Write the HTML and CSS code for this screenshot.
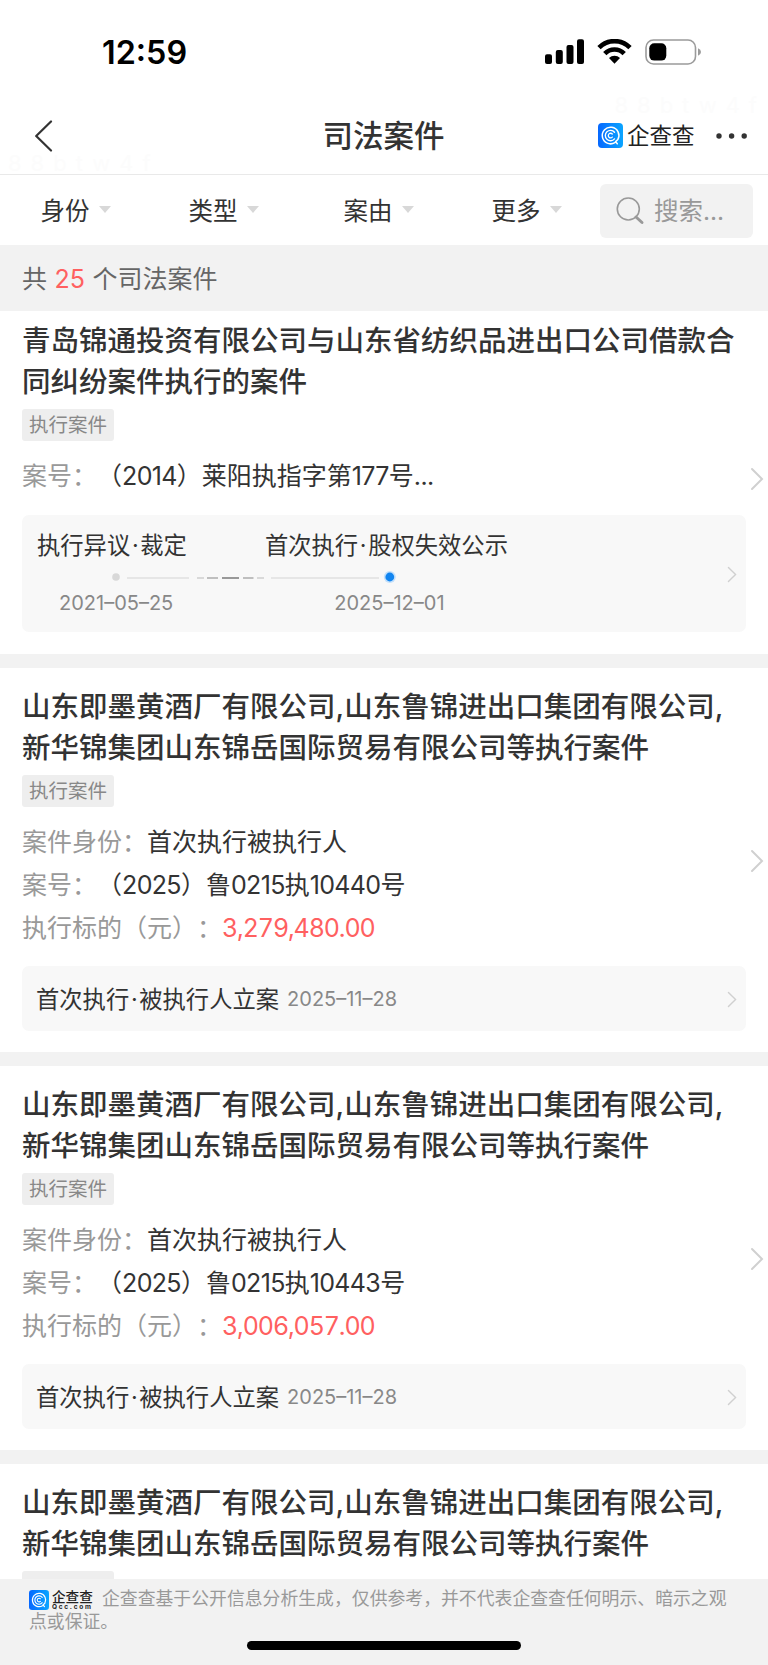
FILE: index.html
```html
<!DOCTYPE html>
<html lang="zh-CN">
  <head>
    <meta charset="utf-8">
    <meta name="viewport" content="width=device-width, initial-scale=1.0">
    <meta content="telephone=no" name="format-detection">
    <title>司法案件</title>
    <link rel="stylesheet" href="styles.css">
  </head>
  <body>
    <svg class="defs" width="0" height="0">
      <defs>
        <linearGradient id="blue" x1="0" y1="0" x2="1" y2="0">
          <stop offset="0" stop-color="#0668ff"/>
          <stop offset="1" stop-color="#0aa5ff"/>
        </linearGradient>
        <symbol id="logo" viewBox="0 0 25 25">
          <rect width="25" height="25" rx="4" fill="url(#blue)"/>
          <g fill="none" stroke="#fff" stroke-linecap="round">
            <path d="M16.9 19.6A8.3 8.3 0 1 1 19.8 16.6L17.6 18.6L19.3 20.8" stroke-width="1.5"/>
            <path d="M16.5 9.2A5.2 5.2 0 1 0 16.5 15.9" stroke-width="1.4"/>
            <path d="M14.3 11A2.3 2.3 0 1 0 14.3 14.1" stroke-width="1.3"/>
          </g>
        </symbol>
        <symbol id="arrow" viewBox="0 0 14 24">
          <path d="M2 2L12 12L2 22" fill="none" stroke="currentColor" stroke-width="2" stroke-linecap="round"/>
        </symbol>
      </defs>
    </svg>
    <div class="container">
      <div class="status">
        <span class="time">12:59</span>
        <svg class="signal" width="156" height="26" viewBox="0 0 156 26">
          <rect x="0" y="15.3" width="7" height="9.7" rx="2"/>
          <rect x="10.8" y="11" width="7" height="14" rx="2"/>
          <rect x="21.5" y="6" width="7" height="19" rx="2"/>
          <rect x="32" y="0.3" width="7" height="24.7" rx="2"/>
          <g fill="none" stroke="#000" stroke-width="4.6">
            <path d="M54 8.7A21.5 21.5 0 0 1 85 8.7"/>
            <path d="M59.8 14.6A13.4 13.4 0 0 1 79.2 14.6"/>
          </g>
          <path d="M64 19A8 8 0 0 1 75 19L69.5 24.8Z"/>
          <rect x="101" y="1" width="49.5" height="24" rx="7.5" fill="none" stroke="#9b9b9b" stroke-width="1.6"/>
          <rect x="104.3" y="4.2" width="17" height="17.4" rx="5"/>
          <path d="M153 9.2Q156 10.4 156 13T153 16.8Z" fill="#9b9b9b"/>
        </svg>
      </div>
      <div class="nav">
        <svg class="back" width="20" height="32" viewBox="0 0 20 32">
          <path d="M17 1.5L2.2 16L17 30.5" fill="none" stroke="#333" stroke-width="2.2" stroke-linecap="round" stroke-linejoin="round"/>
        </svg>
        <h1>司法案件</h1>
        <div class="brand">
          <svg width="25" height="25"><use href="#logo"/></svg>
          <span>企查查</span>
        </div>
        <svg class="more" width="32" height="6" viewBox="0 0 32 6" fill="#333">
          <circle cx="3" cy="3" r="2.7"/>
          <circle cx="15.6" cy="3" r="2.7"/>
          <circle cx="28.2" cy="3" r="2.7"/>
        </svg>
        <span class="mark mark-left">88btw4f</span>
        <span class="mark mark-right">88btw4f</span>
      </div>
      <div class="filter">
        <div class="filter-item">身份</div>
        <div class="filter-item">类型</div>
        <div class="filter-item">案由</div>
        <div class="filter-item">更多</div>
        <div class="search">
          <svg width="30" height="30" viewBox="0 0 30 30" fill="none" stroke="#999">
            <circle cx="13.3" cy="13" r="11" stroke-width="1.6"/>
            <path d="M21 21L27 26.5" stroke-width="3" stroke-linecap="round"/>
          </svg>
          <span>搜索...</span>
        </div>
      </div>
      <div class="summary">共 <em>25</em> 个司法案件</div>
      <div class="list">
        <div class="card">
          <div class="card-body">
            <h2>青岛锦通投资有限公司与山东省纺织品进出口公司借款合同纠纷案件执行的案件</h2>
            <span class="tag">执行案件</span>
            <dl>
              <div><dt>案号：</dt><dd class="no">（<span>2014</span>）莱阳执指字第<span>177</span>号<span>...</span></dd></div>
            </dl>
            <div class="timeline">
              <div class="names"><span>执行异议<i>·</i>裁定</span><span>首次执行<i>·</i>股权失效公示</span></div>
              <svg class="line" width="320" height="14" viewBox="0 0 320 14">
                <circle cx="16" cy="7" r="3.8" fill="#d8d8d8"/>
                <path d="M27 8H89M171 8H279" stroke="#e6e6e6" stroke-width="2"/>
                <path d="M97 8H104M157 8H164" stroke="#d9d9d9" stroke-width="2"/>
                <path d="M107 8H118M143 8H153.500" stroke="#bfbfbf" stroke-width="2"/>
                <path d="M122 8H139" stroke="#999" stroke-width="2"/>
                <circle cx="289.8" cy="7" r="6" fill="#c3e0fb"/>
                <circle cx="289.8" cy="7" r="4.4" fill="#1285f0"/>
              </svg>
              <div class="dates"><span>2021–05–25</span><span>2025–12–01</span></div>
              <svg class="inner-arrow" width="10" height="17"><use href="#arrow"/></svg>
            </div>
          </div>
          <svg class="arrow" width="14" height="24"><use href="#arrow"/></svg>
        </div>
        <div class="card">
          <div class="card-body">
            <h2>山东即墨黄酒厂有限公司,山东鲁锦进出口集团有限公司,新华锦集团山东锦岳国际贸易有限公司等执行案件</h2>
            <span class="tag">执行案件</span>
            <dl>
              <div><dt>案件身份：</dt><dd>首次执行被执行人</dd></div>
              <div><dt>案号：</dt><dd class="no">（<span>2025</span>）鲁<span>0215</span>执<span>10440</span>号</dd></div>
              <div><dt>执行标的（元）：</dt><dd class="money">3,279,480.00</dd></div>
            </dl>
            <div class="stage">
              <span>首次执行<i>·</i>被执行人立案</span><time>2025–11–28</time>
              <svg class="inner-arrow" width="10" height="17"><use href="#arrow"/></svg>
            </div>
          </div>
          <svg class="arrow" width="14" height="24"><use href="#arrow"/></svg>
        </div>
        <div class="card">
          <div class="card-body">
            <h2>山东即墨黄酒厂有限公司,山东鲁锦进出口集团有限公司,新华锦集团山东锦岳国际贸易有限公司等执行案件</h2>
            <span class="tag">执行案件</span>
            <dl>
              <div><dt>案件身份：</dt><dd>首次执行被执行人</dd></div>
              <div><dt>案号：</dt><dd class="no">（<span>2025</span>）鲁<span>0215</span>执<span>10443</span>号</dd></div>
              <div><dt>执行标的（元）：</dt><dd class="money">3,006,057.00</dd></div>
            </dl>
            <div class="stage">
              <span>首次执行<i>·</i>被执行人立案</span><time>2025–11–28</time>
              <svg class="inner-arrow" width="10" height="17"><use href="#arrow"/></svg>
            </div>
          </div>
          <svg class="arrow" width="14" height="24"><use href="#arrow"/></svg>
        </div>
        <div class="card">
          <div class="card-body">
            <h2>山东即墨黄酒厂有限公司,山东鲁锦进出口集团有限公司,新华锦集团山东锦岳国际贸易有限公司等执行案件</h2>
            <span class="tag"></span>
          </div>
        </div>
      </div>
      <div class="footer">
        <p><span class="foot-brand"><svg width="20" height="20"><use href="#logo"/></svg><span class="foot-name"><b>企查查</b><i>Qcc.com</i></span></span>企查查基于公开信息分析生成，仅供参考，并不代表企查查任何明示、暗示之观点或保证。</p>
        <div class="home"></div>
      </div>
    </div>
  </body>
</html>
```
FILE: styles.css
```css
* {
  box-sizing: border-box;
}
body {
  margin: 0;
  color: #333;
  background-color: #fff;
  font-family: Inter, "Noto Sans CJK SC", sans-serif;
  text-spacing-trim: space-all;
}
h1, h2, dl, dd, p {
  margin: 0;
}
em, i {
  font-style: normal;
}
svg {
  display: block;
  flex: none;
}
.defs {
  position: absolute;
}
.container {
  display: flex;
  flex-direction: column;
  width: 768px;
  height: 1665px;
  overflow: hidden;
}
.status {
  display: flex;
  align-items: center;
  justify-content: space-between;
  height: 104px;
  padding: 0 67px 0 102px;
}
.time {
  padding-top: 2px;
  color: #000;
  font-size: 32.3px;
  font-weight: 600;
  line-height: 40px;
}
.nav {
  position: relative;
  display: flex;
  align-items: center;
  height: 71px;
  padding: 0 20px 7px 34px;
  border-bottom: 1px solid #e9e9e9;
}
.nav h1 {
  width: 122px;
  margin-left: 268.5px;
  font-size: 30.5px;
  font-weight: 500;
  line-height: 44px;
  white-space: nowrap;
}
.brand {
  display: flex;
  align-items: center;
  gap: 4px;
  width: 119px;
  margin-left: 153.5px;
  color: #222;
  font-size: 22.5px;
  line-height: 26px;
}
.mark {
  position: absolute;
  color: #fcfcfc;
  font-size: 22px;
  letter-spacing: 9px;
  line-height: 22px;
}
.mark-left {
  left: 8px;
  bottom: 0;
}
.mark-right {
  right: 2px;
  top: -10px;
}
.filter {
  display: grid;
  grid-template-columns: 151px 145px 165px 131px 1fr;
  align-items: center;
  height: 70px;
  padding-right: 15px;
  font-size: 24.5px;
}
.filter-item {
  display: flex;
  align-items: center;
  justify-content: center;
  gap: 9px;
  margin-top: -1px;
}
.filter-item::after {
  content: "";
  border: 6px solid transparent;
  border-top: 7px solid #d8d8d8;
  border-bottom: 0;
}
.search {
  display: flex;
  align-items: center;
  gap: 9px;
  height: 54px;
  margin: 1px 0 0 8px;
  padding-left: 15px;
  border-radius: 6px;
  color: #999;
  background-color: #f2f2f2;
}
.search span {
  margin-top: -2px;
}
.summary {
  position: relative;
  height: 66px;
  padding-left: 22px;
  color: #666;
  background-color: #f2f2f2;
  font-size: 25px;
  line-height: 69px;
  word-spacing: 0.5px;
}
.summary em {
  color: #ff6060;
}
.list {
  flex: 1;
  min-height: 0;
  overflow: hidden;
}
.card {
  display: flex;
  align-items: center;
  padding: 18px 4px 21px 22px;
  border-bottom: 14px solid #f2f2f2;
}
/* first card is scrolled a little under the summary bar */
.card:first-child {
  margin-top: -9px;
  padding-bottom: 22px;
}
.card-body {
  width: 724px;
  margin-right: 4px;
}
.card h2 {
  font-size: 28.5px;
  font-weight: 500;
  line-height: 41px;
}
.tag {
  display: block;
  width: 92px;
  height: 32px;
  margin-top: 7.4px;
  border-radius: 3px;
  color: #888;
  background-color: #eee;
  font-size: 19.5px;
  line-height: 33px;
  text-align: center;
}
dl {
  margin: 13.6px 0 16.6px;
  font-size: 25px;
}
.card:first-child dl {
  margin-bottom: 17.3px;
}
dl div {
  display: flex;
  height: 42.8px;
  line-height: 42.8px;
  white-space: nowrap;
}
dt {
  color: #999;
}
.no span {
  letter-spacing: -0.65px;
}
.money {
  color: #ff6060;
  font-variant-numeric: tabular-nums;
  letter-spacing: -1.12px;
}
.arrow {
  margin-top: 5px;
  color: #d0d0d0;
}
.timeline {
  position: relative;
  height: 117px;
  padding: 14px 15px;
  border-radius: 7px;
  background-color: #f8f8f8;
}
.names {
  display: flex;
  gap: 78px;
  font-size: 23.3px;
  line-height: 34px;
}
.names i,
.stage i {
  padding: 0 1.7px;
}
.line {
  margin: 7px 0 0 63px;
}
.dates {
  display: flex;
  gap: 161px;
  margin: 5px 0 0 22px;
  color: #888;
  font-size: 20px;
  line-height: 28px;
}
.inner-arrow {
  position: absolute;
  right: 9px;
  top: 50%;
  margin-top: -7.5px;
  color: #d0d0d0;
}
.stage {
  position: relative;
  display: flex;
  align-items: center;
  gap: 8px;
  height: 65px;
  padding: 0 0 2px 14px;
  border-radius: 7px;
  background-color: #f8f8f8;
  font-size: 23.3px;
}
.stage time {
  padding-top: 3px;
  color: #888;
  font-size: 20px;
}
.footer {
  height: 86px;
  padding: 9px 29px 0;
  color: #999;
  background-color: #f2f2f2;
}
.footer p {
  font-size: 17.85px;
  line-height: 22.5px;
}
.foot-brand {
  display: inline-flex;
  align-items: center;
  gap: 3px;
  height: 22px;
  padding-top: 2px;
  margin-right: 9px;
  vertical-align: top;
}
.foot-name {
  display: flex;
  flex-direction: column;
  width: 41px;
  color: #222;
}
.foot-name b {
  font-size: 13.6px;
  font-weight: 500;
  line-height: 14px;
}
.foot-name i {
  font-size: 6.5px;
  font-weight: 700;
  letter-spacing: 1.7px;
  line-height: 7px;
}
.home {
  width: 274px;
  height: 9px;
  margin: 8px auto 0;
  border-radius: 5px;
  background-color: #000;
}
```
